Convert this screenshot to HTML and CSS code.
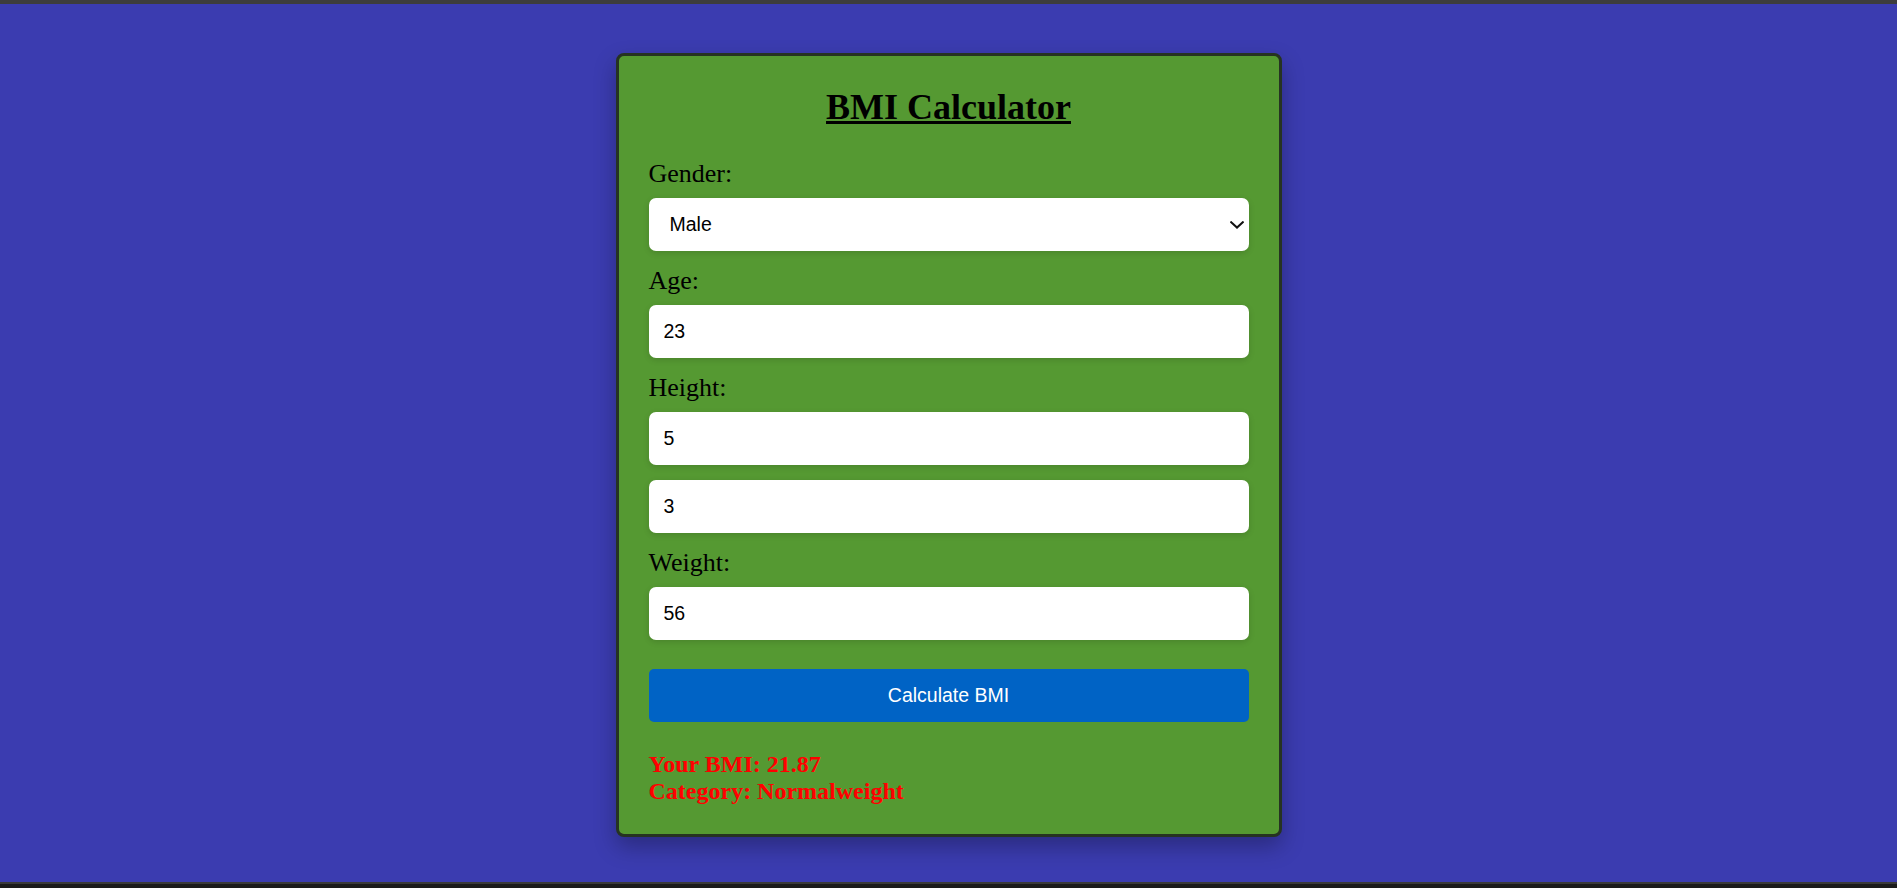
FILE: index.html
```html
<!DOCTYPE html>
<html lang="en">
<head>
<meta charset="utf-8">
<title>BMI Calculator</title>
<link rel="stylesheet" href="styles.css">
</head>
<body>
<div class="topbar"></div>
<main class="page">
  <div class="card">
    <h1 class="title">BMI Calculator</h1>
    <label class="label" for="gender">Gender:</label>
    <div class="select-wrap">
      <select id="gender" class="field select">
        <option>Male</option>
        <option>Female</option>
      </select>
      <svg class="chevron" width="14" height="8" viewBox="0 0 14 8" aria-hidden="true">
        <polyline points="1.2,1.2 7,6.6 12.8,1.2" fill="none" stroke="#111" stroke-width="2" stroke-linecap="square"/>
      </svg>
    </div>
    <label class="label" for="age">Age:</label>
    <input id="age" class="field" type="text" value="23">
    <label class="label" for="feet">Height:</label>
    <input id="feet" class="field" type="text" value="5">
    <input id="inches" class="field" type="text" value="3">
    <label class="label" for="weight">Weight:</label>
    <input id="weight" class="field" type="text" value="56">
    <button class="btn" type="button">Calculate BMI</button>
    <div class="result">
      <div>Your BMI: 21.87</div>
      <div>Category: Normalweight</div>
    </div>
  </div>
</main>
<div class="bottombar"></div>
</body>
</html>
```
FILE: styles.css
```css
html, body {
  margin: 0;
  padding: 0;
  height: 100%;
}

body {
  display: flex;
  flex-direction: column;
  font-family: "Liberation Serif", "Times New Roman", serif;
  background: #3b3cb0;
}

.topbar {
  height: 4px;
  background: #3d3d3d;
  flex: none;
}

.bottombar {
  height: 4px;
  flex: none;
  background: #1b1b1b;
  border-top: 2px solid #3a3a3a;
}

.page {
  flex: 1;
  display: flex;
  justify-content: center;
  align-items: flex-start;
  padding-top: 49px;
  background: #3b3cb0;
}

.card {
  width: 600px;
  padding: 30px;
  background: #559932;
  border: 3px solid #263322;
  border-radius: 8px;
  box-shadow: 0 10px 22px rgba(0, 0, 0, 0.28);
  display: flex;
  flex-direction: column;
}

.title {
  margin: 0 0 31px;
  font-size: 36px;
  font-weight: bold;
  text-align: center;
  text-decoration: underline;
  line-height: normal;
  color: #000;
}

.label {
  display: block;
  font-size: 26px;
  line-height: normal;
  margin-bottom: 9px;
  color: #000;
}

.field {
  box-sizing: border-box;
  width: 100%;
  height: 52.5px;
  margin: 0 0 15.5px;
  padding: 0 15px;
  border: none;
  border-radius: 7px;
  background: #fff;
  font-family: "Liberation Sans", Arial, sans-serif;
  font-size: 19.5px;
  color: #000;
  box-shadow: 0 2px 6px rgba(0, 0, 0, 0.14);
  outline: none;
}

.select-wrap {
  position: relative;
}

.select {
  display: block;
  -webkit-appearance: none;
  appearance: none;
  padding-left: 21px;
  padding-right: 30px;
}

.chevron {
  position: absolute;
  right: 5px;
  top: 23px;
  pointer-events: none;
}

.btn {
  width: 100%;
  height: 52.5px;
  margin-top: 14px;
  border: none;
  border-radius: 5px;
  background: #0063c5;
  color: #fff;
  font-family: "Liberation Sans", Arial, sans-serif;
  font-size: 19.5px;
  cursor: pointer;
}

.result {
  margin-top: 29.5px;
  color: #ff0000;
  font-weight: bold;
  font-size: 24px;
  line-height: 26.6px;
}
```
